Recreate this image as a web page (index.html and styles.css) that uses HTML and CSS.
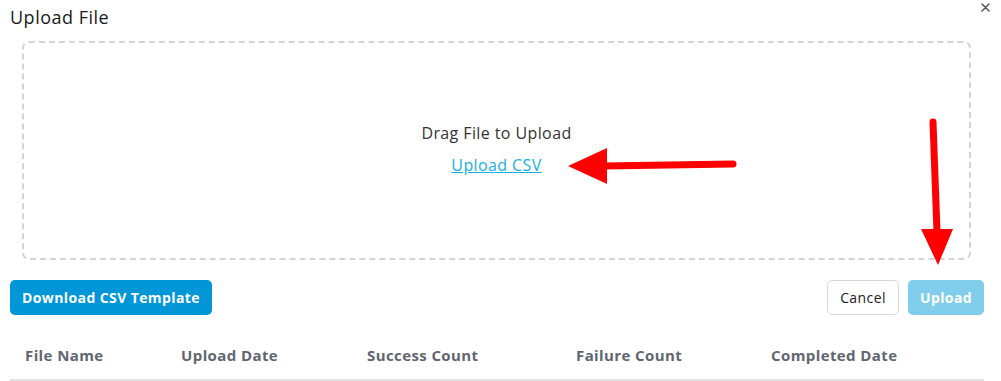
FILE: index.html
```html
<!DOCTYPE html>
<html lang="en">
<head>
    <meta charset="UTF-8">
    <title>Upload File</title>
    <link rel="stylesheet" href="styles.css">
</head>
<body>
    <div class="modal">
        <div class="modal-head">
            <h2>Upload File</h2>
            <svg class="close" width="9" height="9" viewBox="0 0 9 9">
                <path d="M1 1L8 8M8 1L1 8" stroke="#555" stroke-width="1.5" stroke-linecap="round"/>
            </svg>
        </div>

        <div class="dropzone">
            <p>Drag File to Upload</p>
            <a href="#">Upload CSV</a>
        </div>

        <div class="actions">
            <button class="btn btn-primary">Download CSV Template</button>
            <div class="right">
                <button class="btn btn-light">Cancel</button>
                <button class="btn btn-disabled">Upload</button>
            </div>
        </div>

        <table class="files">
            <thead>
                <tr>
                    <th class="c1">File Name</th>
                    <th class="c2">Upload Date</th>
                    <th class="c3">Success Count</th>
                    <th class="c4">Failure Count</th>
                    <th class="c5">Completed Date</th>
                </tr>
            </thead>
        </table>
    </div>

    <!-- annotation arrows drawn over the screenshot -->
    <svg class="marks" width="1001" height="381" viewBox="0 0 1001 381">
        <line x1="733" y1="164" x2="604" y2="166" stroke="#ff0000" stroke-width="7" stroke-linecap="round"/>
        <polygon points="568,166 607,148 607,184" fill="#ff0000"/>
        <line x1="933" y1="122" x2="937" y2="232" stroke="#ff0000" stroke-width="7" stroke-linecap="round"/>
        <polygon points="921,229 953,229 938,265" fill="#ff0000"/>
    </svg>
</body>
</html>
```

FILE: styles.css
```css
body {
    margin: 0;
    font-family: "Open Sans", Arial, sans-serif;
    background: #fff;
    color: #222;
}

.modal {
    padding: 0 17px 0 10px;
    width: 974px;
}

.modal-head {
    display: flex;
    justify-content: space-between;
    height: 41px;
}

.modal-head h2 {
    margin: 5px 0 0;
    font-size: 18px;
    font-weight: 500;
    letter-spacing: 0.5px;
    color: #1a1a1c;
}

.close {
    margin: 3px -6px 0 0;
}

.dropzone {
    margin: 0 13px 0 12px;
    height: 219px;
    border: 2px dashed #d2d4d9;
    border-radius: 7px;
    display: flex;
    flex-direction: column;
    align-items: center;
    justify-content: center;
    padding-bottom: 4px;
    box-sizing: border-box;
}

.dropzone p {
    margin: 0 0 10px;
    font-size: 16px;
    letter-spacing: 0.4px;
    color: #333;
}

.dropzone a {
    font-size: 16px;
    letter-spacing: 0.4px;
    color: #18aee6;
}

.actions {
    display: flex;
    justify-content: space-between;
    margin-top: 20px;
}

.right {
    display: flex;
    gap: 9px;
}

.btn {
    font-family: "Open Sans", Arial, sans-serif;
    font-size: 14px;
    letter-spacing: 0.4px;
    height: 35px;
    border-radius: 5px;
    padding: 0 10px;
    border: none;
}

.btn-primary {
    background: #0096d8;
    color: #fff;
    font-weight: 700;
    width: 202px;
}

.btn-light {
    background: #fff;
    color: #222;
    border: 1px solid #d8d8dc;
    width: 72px;
}

.btn-disabled {
    background: #80cdec;
    color: #fff;
    font-weight: 700;
    width: 76px;
}

.files {
    width: 974px;
    border-collapse: collapse;
    margin-top: 15px;
}

.files th {
    text-align: left;
    height: 49px;
    padding: 0 0 0 15px;
    font-size: 15px;
    letter-spacing: 0.4px;
    font-weight: 700;
    color: #5f6671;
    border-bottom: 2px solid #e3e3e6;
}

.c1 { width: 141px; }
.c2 { width: 171px; }
.c3 { width: 194px; }
.c4 { width: 180px; }

.marks {
    position: absolute;
    left: 0;
    top: 0;
}
```
